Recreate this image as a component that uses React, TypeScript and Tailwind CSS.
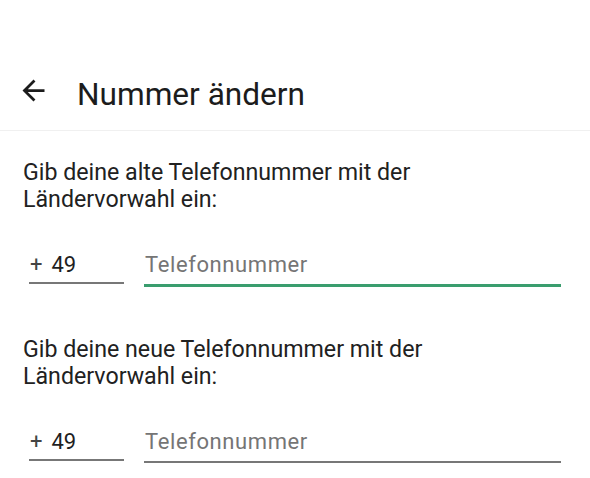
import React from "react";

function PhoneRow({ focused }: { focused: boolean }) {
  return (
    <div className="flex items-start pl-[29px]">
      <div className="w-[95px] border-b-2 border-[#777777] pb-[5px] flex items-baseline">
        <span className="text-[22px] leading-[24px] text-[#444444] pl-[1px]">+</span>
        <span className="text-[22px] leading-[24px] text-[#1f1f1f] pl-[9px]">49</span>
      </div>
      <div
        className={
          "ml-[20px] w-[417px] pb-[5px] " +
          (focused ? "border-b-[3px] border-[#3a9d6e]" : "border-b-2 border-[#777777]")
        }
      >
        <span className="text-[22px] leading-[24px] tracking-[0.6px] text-[#757575] pl-[1px]">
          Telefonnummer
        </span>
      </div>
    </div>
  );
}

export default function App() {
  return (
    <div
      className="w-[590px] h-[478px] bg-white overflow-hidden"
      style={{ fontFamily: "Roboto, 'Noto Sans', sans-serif" }}
    >
      <div className="flex items-start pt-[75px] pb-[15px] pl-[17px] border-b border-[#f0f0f0]">
        <svg
          width="33"
          height="33"
          viewBox="0 0 24 24"
          className="mt-[-1px] shrink-0"
          fill="#1c1c1c"
        >
          <path d="M20 11H7.83l5.59-5.59L12 4l-8 8 8 8 1.41-1.41L7.83 13H20v-2z" />
        </svg>
        <div className="ml-[27px] text-[31.6px] leading-[40px] text-[#1c1c1c]">Nummer ändern</div>
      </div>

      <div className="pl-[23px] pt-[28px] text-[23.2px] leading-[27px] text-[#212121]">
        Gib deine alte Telefonnummer mit der
        <br />
        Ländervorwahl ein:
      </div>
      <div className="pt-[40px]">
        <PhoneRow focused={true} />
      </div>

      <div className="pl-[23px] pt-[49px] text-[23.2px] leading-[27px] text-[#212121]">
        Gib deine neue Telefonnummer mit der
        <br />
        Ländervorwahl ein:
      </div>
      <div className="pt-[40px]">
        <PhoneRow focused={false} />
      </div>
    </div>
  );
}
